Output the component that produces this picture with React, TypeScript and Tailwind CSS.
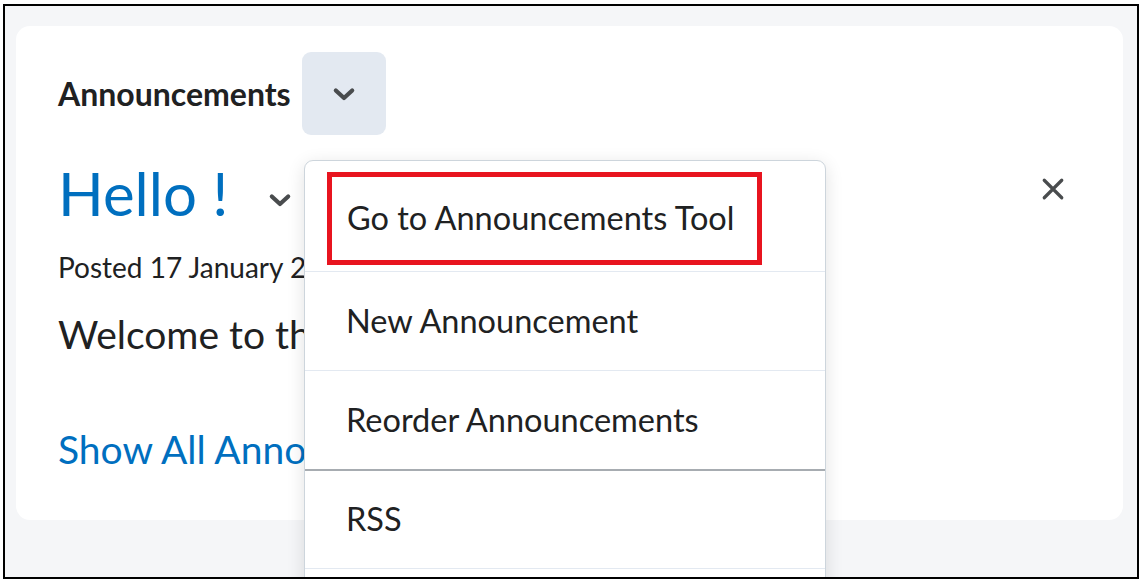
import React from 'react';

const Chevron: React.FC<{ className?: string }> = ({ className }) => (
  <svg viewBox="0 0 24 24" className={className} fill="none" stroke="currentColor" strokeWidth={3.6} strokeLinecap="round" strokeLinejoin="round">
    <path d="M5 9l7 6.5L19 9" />
  </svg>
);

const menuItems = ['Go to Announcements Tool', 'New Announcement', 'Reorder Announcements', 'RSS', ''];

const App: React.FC = () => {
  return (
    <div className="w-[1142px] h-[582px] bg-white pl-[3px] pt-[4px] font-['Lato',sans-serif]">
      <div className="relative w-[1136px] h-[575px] border-2 border-black bg-[#f5f6f8] overflow-hidden pl-[11px] pr-[14px] pt-[20px]">
        {/* Widget card */}
        <div className="h-[494px] bg-white rounded-[14px] pl-[42px] pr-[56px] pt-[26px]">
          <div className="flex items-center h-[83px]">
            <h2 className="text-[32px] font-bold text-[#202122] leading-none">Announcements</h2>
            <button className="ml-[11px] w-[84px] h-[83px] rounded-[9px] bg-[#e3e9f1] flex items-center justify-center text-[#494c4e]">
              <Chevron className="w-[28px] h-[28px]" />
            </button>
          </div>

          <div className="flex items-center justify-between mt-[22px]">
            <div className="flex items-center">
              <span className="text-[60px] leading-[72px] text-[#006fbf]">Hello !</span>
              <Chevron className="ml-[38px] mt-[14px] w-[28px] h-[28px] text-[#494c4e]" />
            </div>
            <svg viewBox="0 0 24 24" className="w-[30px] h-[30px] text-[#494c4e] -mt-[8px] -mr-[1px]" fill="none" stroke="currentColor" strokeWidth={2.6} strokeLinecap="round">
              <path d="M5 5l14 14M19 5L5 19" />
            </svg>
          </div>

          <p className="w-[246px] overflow-hidden whitespace-nowrap mt-[22px] text-[28px] leading-[32px] text-[#202122]">Posted 17 January 2024</p>
          <p className="w-[246px] overflow-hidden whitespace-nowrap mt-[29px] text-[39px] leading-[44px] text-[#202122]">Welcome to the course!</p>
          <a className="block w-[246px] overflow-hidden whitespace-nowrap mt-[71px] text-[39px] leading-[44px] text-[#006fbf]">Show All Announcements</a>
        </div>

        {/* Open context menu */}
        <div className="absolute left-[299px] top-[154px] w-[522px] bg-white border border-[#cdd5dc] rounded-[9px] shadow-[0_4px_18px_rgba(0,0,0,0.12)]">
          {menuItems.map((item, i) => (
            <div
              key={i}
              className={
                i === 0
                  ? 'h-[110px] pt-[11px]'
                  : i === 3
                  ? 'h-[99px] flex items-center border-t-2 border-[#a7acb1]'
                  : 'h-[99px] flex items-center border-t border-[#e3e9f1]'
              }
            >
              {i === 0 ? (
                <div className="ml-[22px] w-[435px] h-[93px] border-[5px] border-[#e8141f] flex items-center pl-[15px]">
                  <span className="text-[32.5px] text-[#202122]">{item}</span>
                </div>
              ) : (
                <span className="ml-[41px] text-[32.5px] text-[#202122]">{item}</span>
              )}
            </div>
          ))}
        </div>
      </div>
    </div>
  );
};

export default App;
